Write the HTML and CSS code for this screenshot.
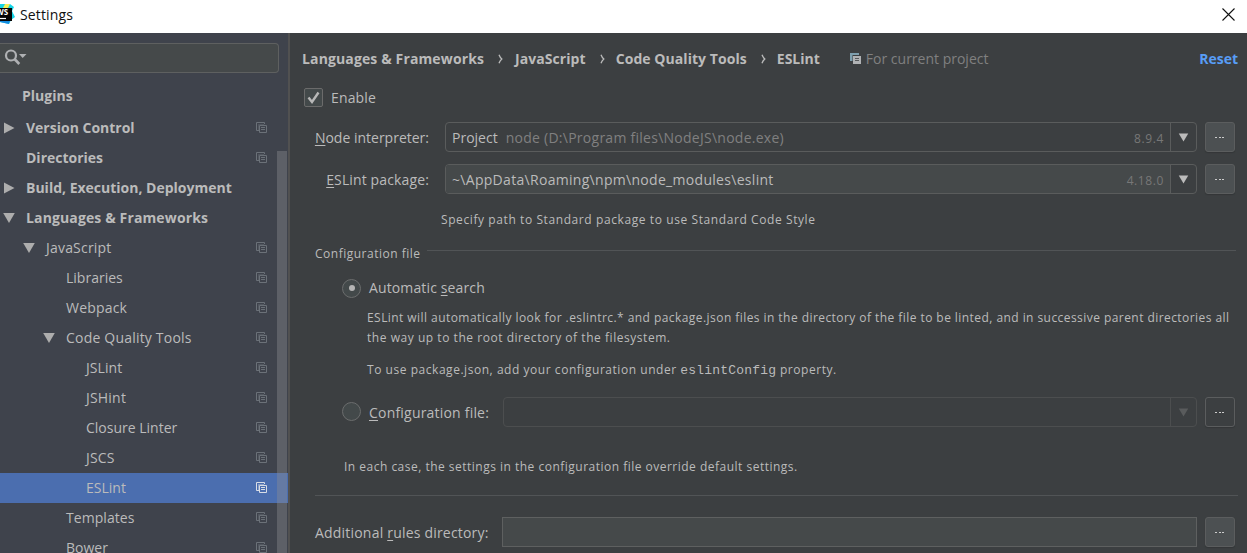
FILE: index.html
```
<!DOCTYPE html>
<html lang="en">
<head>
<meta charset="utf-8">
<title>Settings</title>
<link rel="stylesheet" href="styles.css">
</head>
<body>
<svg class="defs" width="0" height="0" aria-hidden="true">
  <symbol id="copy" viewBox="0 0 11 11"><path d="M3 8.500H.5V.5H8.500V2" fill="none" stroke="currentColor"/><path d="M2.500 8V2.500H8" fill="none" stroke="currentColor" opacity=".45"/><path d="M3.500 3.500H10.500V10.500H3.500zM5 5.500H9M5 7.500H9" fill="none" stroke="currentColor"/></symbol>
  <symbol id="right" viewBox="0 0 12 12"><path d="M1 .5L11.500 6L1 11.500z" fill="currentColor"/></symbol>
  <symbol id="down" viewBox="0 0 12 11"><path d="M.2 .5H11.800L6 10.500z" fill="currentColor"/></symbol>
  <symbol id="chev" viewBox="0 0 5 10"><path d="M1 .8Q2 3.500 3.800 5Q2 6.500 1 9.200" fill="none" stroke="currentColor" stroke-width="1.300"/></symbol>
  <symbol id="dots" viewBox="0 0 10 2"><path d="M0 .5H2M4 .5H6M7 .5H9" stroke="currentColor"/></symbol>
</svg>
<header class="titlebar">
  <svg class="logo" width="15" height="20" viewBox="0 0 15 20"><path d="M0 0L10 0L14 3L12 7L15 13L11 16L9 20L0 18z" fill="#15d3e6"/><path d="M5 0H10L8 4H3z" fill="#f3ee55"/><path d="M0 14L10 16L9 20L0 18z" fill="#158be0"/><path d="M0 4H12V17H0z" fill="#050505"/><path d="M0 14.500H6" stroke="#fff" stroke-width="1.200"/><text class="logo-text" x="-4" y="11">WS</text></svg>
  <span class="title">Settings</span>
  <svg class="close" width="13" height="13" viewBox="0 0 13 13"><path d="M.5 .5L12.500 12.500M12.500 .5L.5 12.500" stroke="#111" stroke-width="1.100"/></svg>
</header>
<div class="window">
  <aside class="sidebar">
    <div class="search"><svg width="24" height="17" viewBox="0 0 24 17"><circle cx="7" cy="6.500" r="5" fill="none" stroke="#afb1b3" stroke-width="2.200"/><path d="M10.500 10L15.300 15" stroke="#afb1b3" stroke-width="2.600"/><path d="M15 5H22.500L18.700 9z" fill="#afb1b3"/></svg></div>
    <nav class="tree">
      <div class="item group plugins"><span>Plugins</span></div>
      <div class="item group l0"><svg class="arrow"><use href="#right"/></svg><span>Version Control</span><svg class="copy"><use href="#copy"/></svg></div>
      <div class="item group l0"><span class="arrow"></span><span>Directories</span><svg class="copy"><use href="#copy"/></svg></div>
      <div class="item group l0"><svg class="arrow"><use href="#right"/></svg><span>Build, Execution, Deployment</span></div>
      <div class="item group l0"><svg class="arrow"><use href="#down"/></svg><span class="ls2">Languages &amp; Frameworks</span></div>
      <div class="item l1"><svg class="arrow"><use href="#down"/></svg><span class="ls3">JavaScript</span><svg class="copy"><use href="#copy"/></svg></div>
      <div class="item l2"><span class="arrow"></span><span>Libraries</span><svg class="copy"><use href="#copy"/></svg></div>
      <div class="item l2"><span class="arrow"></span><span class="ls3">Webpack</span><svg class="copy"><use href="#copy"/></svg></div>
      <div class="item l2"><svg class="arrow"><use href="#down"/></svg><span class="ls3">Code Quality Tools</span><svg class="copy"><use href="#copy"/></svg></div>
      <div class="item l3"><span class="ls1">JSLint</span><svg class="copy"><use href="#copy"/></svg></div>
      <div class="item l3"><span class="ls3">JSHint</span><svg class="copy"><use href="#copy"/></svg></div>
      <div class="item l3"><span>Closure Linter</span><svg class="copy"><use href="#copy"/></svg></div>
      <div class="item l3"><span class="ls3">JSCS</span><svg class="copy"><use href="#copy"/></svg></div>
      <div class="item l3 selected"><span>ESLint</span><svg class="copy"><use href="#copy"/></svg></div>
      <div class="item l2"><span class="arrow"></span><span class="ls1">Templates</span><svg class="copy"><use href="#copy"/></svg></div>
      <div class="item l2"><span class="arrow"></span><span>Bower</span><svg class="copy"><use href="#copy"/></svg></div>
    </nav>
    <div class="scrollbar"></div>
  </aside>
  <main class="panel">
    <div class="crumbs">
      <b class="ls2">Languages &amp; Frameworks</b><svg class="chev first"><use href="#chev"/></svg><b class="ls1">JavaScript</b><svg class="chev"><use href="#chev"/></svg><b class="ls1">Code Quality Tools</b><svg class="chev"><use href="#chev"/></svg><b>ESLint</b>
      <svg class="scope-icon" viewBox="0 0 11 11"><path d="M0 0H9V2H2.500V8H0z" fill="#7e9fae"/><path d="M3 3H11V11H3z" fill="#b0b2b4"/><path d="M5 5.500H9M5 7.500H9" stroke="#55585a"/></svg>
      <span class="scope">For current project</span><b class="reset">Reset</b>
    </div>
    <div class="enable"><svg class="check" width="19" height="19" viewBox="0 0 19 19"><rect x=".5" y=".5" width="18" height="18" rx="1.500" fill="#43494a" stroke="#6b6b6b"/><path d="M4.500 9.500L8 14L14.500 4.500" fill="none" stroke="#b8b8b8" stroke-width="2.400"/></svg><span class="ls2">Enable</span></div>
    <div class="row node"><label><u>N</u>ode interpreter:</label><div class="combo"><div class="value"><span>Project</span><span class="muted path">node (D:\Program files\NodeJS\node.exe)</span><span class="version">8.9.4</span></div><svg class="drop"><use href="#down"/></svg></div><button class="more"><svg><use href="#dots"/></svg></button></div>
    <div class="row pkg"><label class="ls2"><u>E</u>SLint package:</label><div class="combo filled"><div class="value"><span class="pkgpath">~\AppData\Roaming\npm\node_modules\eslint</span><span class="version">4.18.0</span></div><svg class="drop"><use href="#down"/></svg></div><button class="more"><svg><use href="#dots"/></svg></button></div>
    <div class="hint small">Specify path to Standard package to use Standard Code Style</div>
    <div class="legend small"><span>Configuration file</span></div>
    <div class="radio"><i class="dot on"></i><span class="ls2">Automatic <u>s</u>earch</span></div>
    <div class="help small">
      <p><span class="lead">ESLint will automatically look for .eslintrc.* and package.json files in the directory of the file to be linted, and in successive parent directories all</span><br>the way up to the root directory of the filesystem.</p>
      <p>To use package.json, add your configuration under <code>eslintConfig</code> property.</p>
    </div>
    <div class="row config"><i class="dot"></i><label class="ls3"><u>C</u>onfiguration file:</label><div class="combo disabled"><div class="value"></div><svg class="drop"><use href="#down"/></svg></div><button class="more flat"><svg><use href="#dots"/></svg></button></div>
    <div class="note small">In each case, the settings in the configuration file override default settings.</div>
    <div class="row rules"><label class="ls3">Additional <u>r</u>ules directory:</label><div class="field"></div><button class="more"><svg><use href="#dots"/></svg></button></div>
  </main>
</div>
</body>
</html>
```
FILE: styles.css
```
* { box-sizing: border-box; }
body { margin: 0; width: 1247px; height: 553px; overflow: hidden; background: #3c3f41; color: #bbbbbb; font: 14px/20px "Open Sans", "Noto Sans", sans-serif; white-space: nowrap; }
svg, i { flex: none; display: block; }
.defs { position: absolute; }
u { text-decoration-thickness: 1px; text-underline-offset: 2px; }
.ls1 { letter-spacing: .06px; }
.ls2 { letter-spacing: .13px; }
.ls3 { letter-spacing: .2px; }

.titlebar { height: 33px; background: #fff; color: #111; display: flex; align-items: center; padding-right: 12px; }
.logo { margin-top: -6px; }
.logo-text { font: bold 8px "Open Sans", sans-serif; fill: #fff; }
.title { margin: -4px auto 0 5px; letter-spacing: .15px; }
.close { margin-top: -5px; }

.window { display: flex; height: 520px; }
.sidebar { width: 290px; flex: none; background: #3f434c; border-right: 2px solid #515151; position: relative; overflow: hidden; }
.search { margin-top: 10px; width: 279px; height: 30px; background: #45494a; border: 1px solid #5e6060; border-left: 0; border-radius: 0 4px 4px 0; padding: 5px 0 0 4px; }
.tree { padding-top: 8px; }
.item { height: 30px; display: flex; align-items: center; padding-right: 21px; }
.plugins { padding-left: 22px; margin-bottom: 2px; }
.group { font-weight: 700; }
.arrow { width: 12px; height: 12px; color: #adadad; margin-right: 11px; flex: none; }
.l0 { padding-left: 3px; }
.l1 { padding-left: 23px; }
.l2 { padding-left: 43px; }
.l3 { padding-left: 86px; }
.copy { width: 11px; height: 11px; margin: -1px 0 0 auto; color: #6b7178; }
.selected { background: #4b6eaf; }
.selected .copy { color: #d8dde6; }
.scrollbar { position: absolute; right: 1px; top: 118px; width: 10px; height: 402px; background: rgba(140, 141, 145, .4); }

.panel { flex: 1; min-width: 0; }
.crumbs { height: 50px; display: flex; align-items: center; padding: 2px 9px 0 12px; }
.chev { width: 5px; height: 10px; margin: 0 11px 0 14px; }
.first { margin-right: 12px; }
.scope-icon { width: 11px; height: 11px; margin: -1px 5px 0 30px; }
.scope, .muted { color: #808080; }
.reset { color: #589df6; margin-left: auto; }
.enable { height: 30px; display: flex; align-items: center; padding-left: 14px; gap: 8px; }
.check { margin-top: -1px; }
.row { display: flex; height: 30px; align-items: center; padding-right: 12px; }
.row label { padding-top: 1px; }
.node { margin-top: 9px; }
.pkg { margin-top: 12px; }
.node label, .pkg label { width: 139px; text-align: right; margin-right: 16px; }
.combo { flex: 1; height: 30px; display: flex; align-items: center; border: 1px solid #5a5c5c; border-radius: 4px; overflow: hidden; }
.value { flex: 1; height: 28px; display: flex; align-items: center; padding: 2px 6px 0 6px; border-right: 1px solid #5a5c5c; }
.filled .value { background: #45494a; }
.path { margin-left: 8px; letter-spacing: .26px; }
.pkgpath { letter-spacing: .3px; }
.version { margin-left: auto; color: #777; font-size: 12px; letter-spacing: .6px; padding-top: 1px; }
.drop { width: 11px; height: 9px; margin: 1px 7px 0; color: #bbb; }
.more { width: 30px; height: 30px; margin-left: 8px; padding: 0; background: #4c5052; border: 1px solid #5b5d5e; border-radius: 3px; box-shadow: 0 1px 1px #333638; color: #ccc; }
.more svg { width: 10px; height: 2px; margin: 1px auto 0; }
.small { font-size: 12px; letter-spacing: .54px; }
.hint { height: 50px; padding: 16px 0 0 151px; letter-spacing: .59px; }
.legend { height: 18px; line-height: 18px; display: flex; padding: 1px 11px 0 25px; gap: 6px; letter-spacing: .5px; }
.legend::after { content: ""; flex: 1; height: 1px; margin-top: 5px; background: #515456; }
.radio { margin-top: 11px; height: 30px; display: flex; align-items: center; padding-left: 52px; gap: 8px; }
.dot { width: 19px; height: 19px; border: 1px solid #6b6d6d; border-radius: 50%; background: #43494a; display: flex; align-items: center; justify-content: center; }
.on::after { content: ""; width: 6px; height: 6px; border-radius: 50%; background: #b5b5b5; }
.help { height: 89px; padding: 5px 0 0 77px; }
.help p { margin: 0 0 12px; }
.lead { letter-spacing: .44px; }
code { font: 13px/16px "Liberation Mono", monospace; letter-spacing: .2px; }
.config { margin-top: 5px; padding-left: 52px; }
.config .dot { margin-top: -1px; }
.config label { width: 134px; margin-left: 8px; }
.disabled, .disabled .value { border-color: #4c4e4f; }
.disabled .drop { color: #595b5c; }
.flat { background: transparent; }
.note { height: 69px; padding: 30px 0 0 29px; border-bottom: 1px solid #515456; margin: 0 9px 21px 25px; letter-spacing: .49px; }
.rules { padding-left: 25px; }
.rules label { width: 187px; }
.field { flex: 1; height: 30px; background: #45494a; border: 1px solid #5e6060; }
```
